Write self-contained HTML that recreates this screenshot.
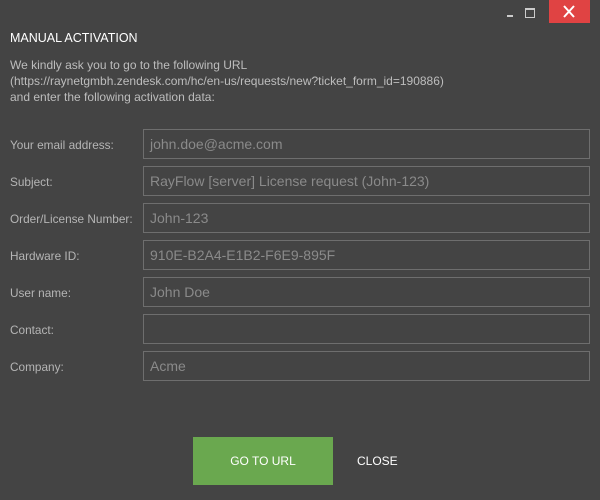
<!DOCTYPE html>
<html><head><style>
body{margin:0;width:600px;height:500px;background:#444444;font-family:"Liberation Sans",sans-serif;position:relative;overflow:hidden}
.a{position:absolute}
.t{color:#fff;font-size:12.5px;left:10px;top:31px}
.p{color:#bdbdbd;font-size:12px;left:10px;top:57px;line-height:16px}
.l{left:10px;color:#b5b5b5;font-size:11.8px}
.i{left:143px;height:28px;border:1px solid #6e6e6e;color:#8a8a8a;font-size:14px;line-height:28px;padding-left:6px;box-sizing:content-box;width:439px}
.b{left:193px;top:437px;width:140px;height:48px;background:#6aa84f;color:#fff;font-size:12px;text-align:center;line-height:48px}
.c{left:357px;top:437px;line-height:48px;color:#fff;font-size:12px}
</style></head><body>
<div class="a" style="left:549px;top:0;width:41px;height:23px;background:#e04343"></div>
<svg class="a" style="left:562px;top:5px" width="14" height="13"><path d="M2 1 L12 12 M12 1 L2 12" stroke="#fff" stroke-width="2"/></svg>
<div class="a" style="left:507px;top:15px;width:6px;height:2px;background:#ccc"></div>
<div class="a" style="left:525px;top:8px;width:8px;height:7px;border:1px solid #ccc;border-top-width:2px"></div>
<div class="a t">MANUAL ACTIVATION</div>
<div class="a p">We kindly ask you to go to the following URL<br>(https://raynetgmbh.zendesk.com/hc/en-us/requests/new?ticket_form_id=190886)<br>and enter the following activation data:</div>
<div class="a l" style="top:138px">Your email address:</div><div class="a i" style="top:129px">john.doe@acme.com</div>
<div class="a l" style="top:175px">Subject:</div><div class="a i" style="top:166px">RayFlow [server] License request (John-123)</div>
<div class="a l" style="top:212px">Order/License Number:</div><div class="a i" style="top:203px">John-123</div>
<div class="a l" style="top:249px">Hardware ID:</div><div class="a i" style="top:240px">910E-B2A4-E1B2-F6E9-895F</div>
<div class="a l" style="top:286px">User name:</div><div class="a i" style="top:277px">John Doe</div>
<div class="a l" style="top:323px">Contact:</div><div class="a i" style="top:314px"></div>
<div class="a l" style="top:360px">Company:</div><div class="a i" style="top:351px">Acme</div>
<div class="a b">GO TO URL</div>
<div class="a c">CLOSE</div>
</body></html>
